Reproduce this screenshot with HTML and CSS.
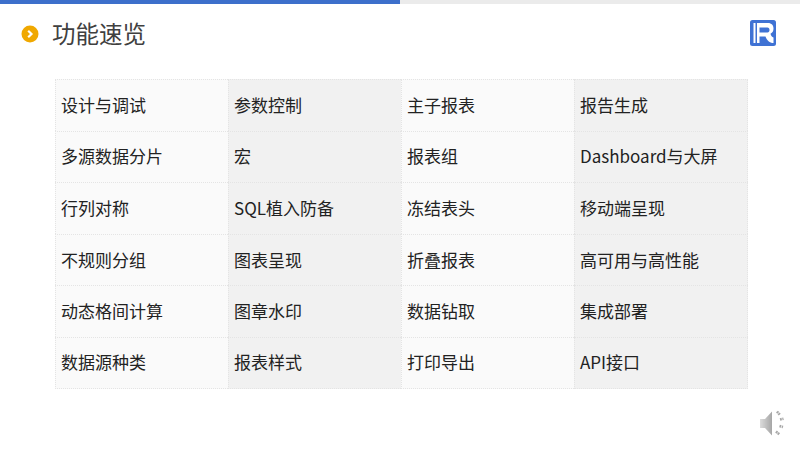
FILE: index.html
```html
<!DOCTYPE html>
<html lang="zh-CN">
<head>
<meta charset="utf-8">
<title>功能速览</title>
<link rel="stylesheet" href="styles.css">
</head>
<body>
<div class="slide">
  <div class="progress"><div class="progress-fill"></div></div>
  <header class="head">
    <svg class="bullet" width="18" height="18" viewBox="0 0 18 18"><circle cx="9" cy="9" r="8.500" fill="#f0a800"/><path d="M7.200 5.700 10.500 9 7.200 12.300" fill="none" stroke="#fff" stroke-width="2.200"/></svg>
    <h1 class="title">功能速览</h1>
    <svg class="logo" width="26" height="26" viewBox="0 0 26 26"><rect width="26" height="26" rx="2.500" fill="#3f72d4"/><rect x="3.500" y="3" width="2" height="20" fill="#fff"/><path d="M7 3H18c3.500 0 5.500 2.300 5.500 5.500 0 2.600-1 4.300-3 5.200.6 2.200 1.500 3.300 3 3.800V23c-4 0-6.500-2.500-8-6.500H9.500V23H7zM9.500 7.500v5h8c1.300 0 2-1 2-2.500s-.7-2.500-2-2.500z" fill="#fff"/></svg>
  </header>
  <div class="grid">
    <div class="cell">设计与调试</div><div class="cell alt">参数控制</div><div class="cell">主子报表</div><div class="cell alt">报告生成</div>
    <div class="cell">多源数据分片</div><div class="cell alt">宏</div><div class="cell">报表组</div><div class="cell alt">Dashboard与大屏</div>
    <div class="cell">行列对称</div><div class="cell alt">SQL植入防备</div><div class="cell">冻结表头</div><div class="cell alt">移动端呈现</div>
    <div class="cell">不规则分组</div><div class="cell alt">图表呈现</div><div class="cell">折叠报表</div><div class="cell alt">高可用与高性能</div>
    <div class="cell">动态格间计算</div><div class="cell alt">图章水印</div><div class="cell">数据钻取</div><div class="cell alt">集成部署</div>
    <div class="cell">数据源种类</div><div class="cell alt">报表样式</div><div class="cell">打印导出</div><div class="cell alt">API接口</div>
  </div>
  <svg class="speaker" width="28" height="28" viewBox="0 0 28 28"><defs><linearGradient id="sp" x1="0" x2="1" y1="0" y2="0"><stop offset="0" stop-color="#dcdcdc"/><stop offset="1" stop-color="#a6a6a6"/></linearGradient></defs><path d="M1 9h5l7-7.500v24L6 18H1z" fill="url(#sp)"/><path d="M18 1.500l3 3.500M21 9.500l3.500-.8M20.500 16l3.500 1M17 21.500l3.500 3" stroke="#a8a8a8" stroke-width="2.600" stroke-dasharray="1.800 .6" fill="none"/></svg>
</div>
</body>
</html>
```
FILE: styles.css
```css
html, body {
  margin: 0;
  padding: 0;
  background: #fff;
}
.slide {
  position: relative;
  width: 800px;
  height: 450px;
  overflow: hidden;
  font-family: "Noto Sans CJK SC", "Noto Sans", sans-serif;
}
.progress {
  height: 4px;
  background: #ebebeb;
}
.progress-fill {
  width: 400px;
  height: 100%;
  background: #3d6fcb;
}
.head {
  display: flex;
  align-items: center;
  height: 60px;
  padding: 0 24px 0 21px;
}
.bullet {
  flex: none;
}
.title {
  flex: 1;
  margin: -2px 0 0 13px;
  font-size: 23.5px;
  line-height: 60px;
  font-weight: 400;
  color: #404040;
}
.logo {
  flex: none;
  margin-top: -3px;
}
.grid {
  display: grid;
  grid-template-columns: repeat(3, 173px) 174px;
  grid-auto-rows: 51.6px;
  width: 693px;
  margin: 15px 0 0 55px;
}
.cell {
  display: flex;
  align-items: center;
  box-sizing: border-box;
  padding: 0 0 2px 5px;
  font-size: 17px;
  font-weight: 400;
  color: #222;
  background: #fafafa;
  border-top: 1px dotted #e4e4e4;
  border-left: 1px dotted #e4e4e4;
}
.alt {
  background: #f1f1f1;
}
.cell:nth-child(4n) {
  border-right: 1px dotted #e4e4e4;
}
.cell:nth-last-child(-n+4) {
  border-bottom: 1px dotted #e4e4e4;
}
.speaker {
  position: absolute;
  left: 759px;
  top: 410px;
  filter: blur(0.4px);
}
```
